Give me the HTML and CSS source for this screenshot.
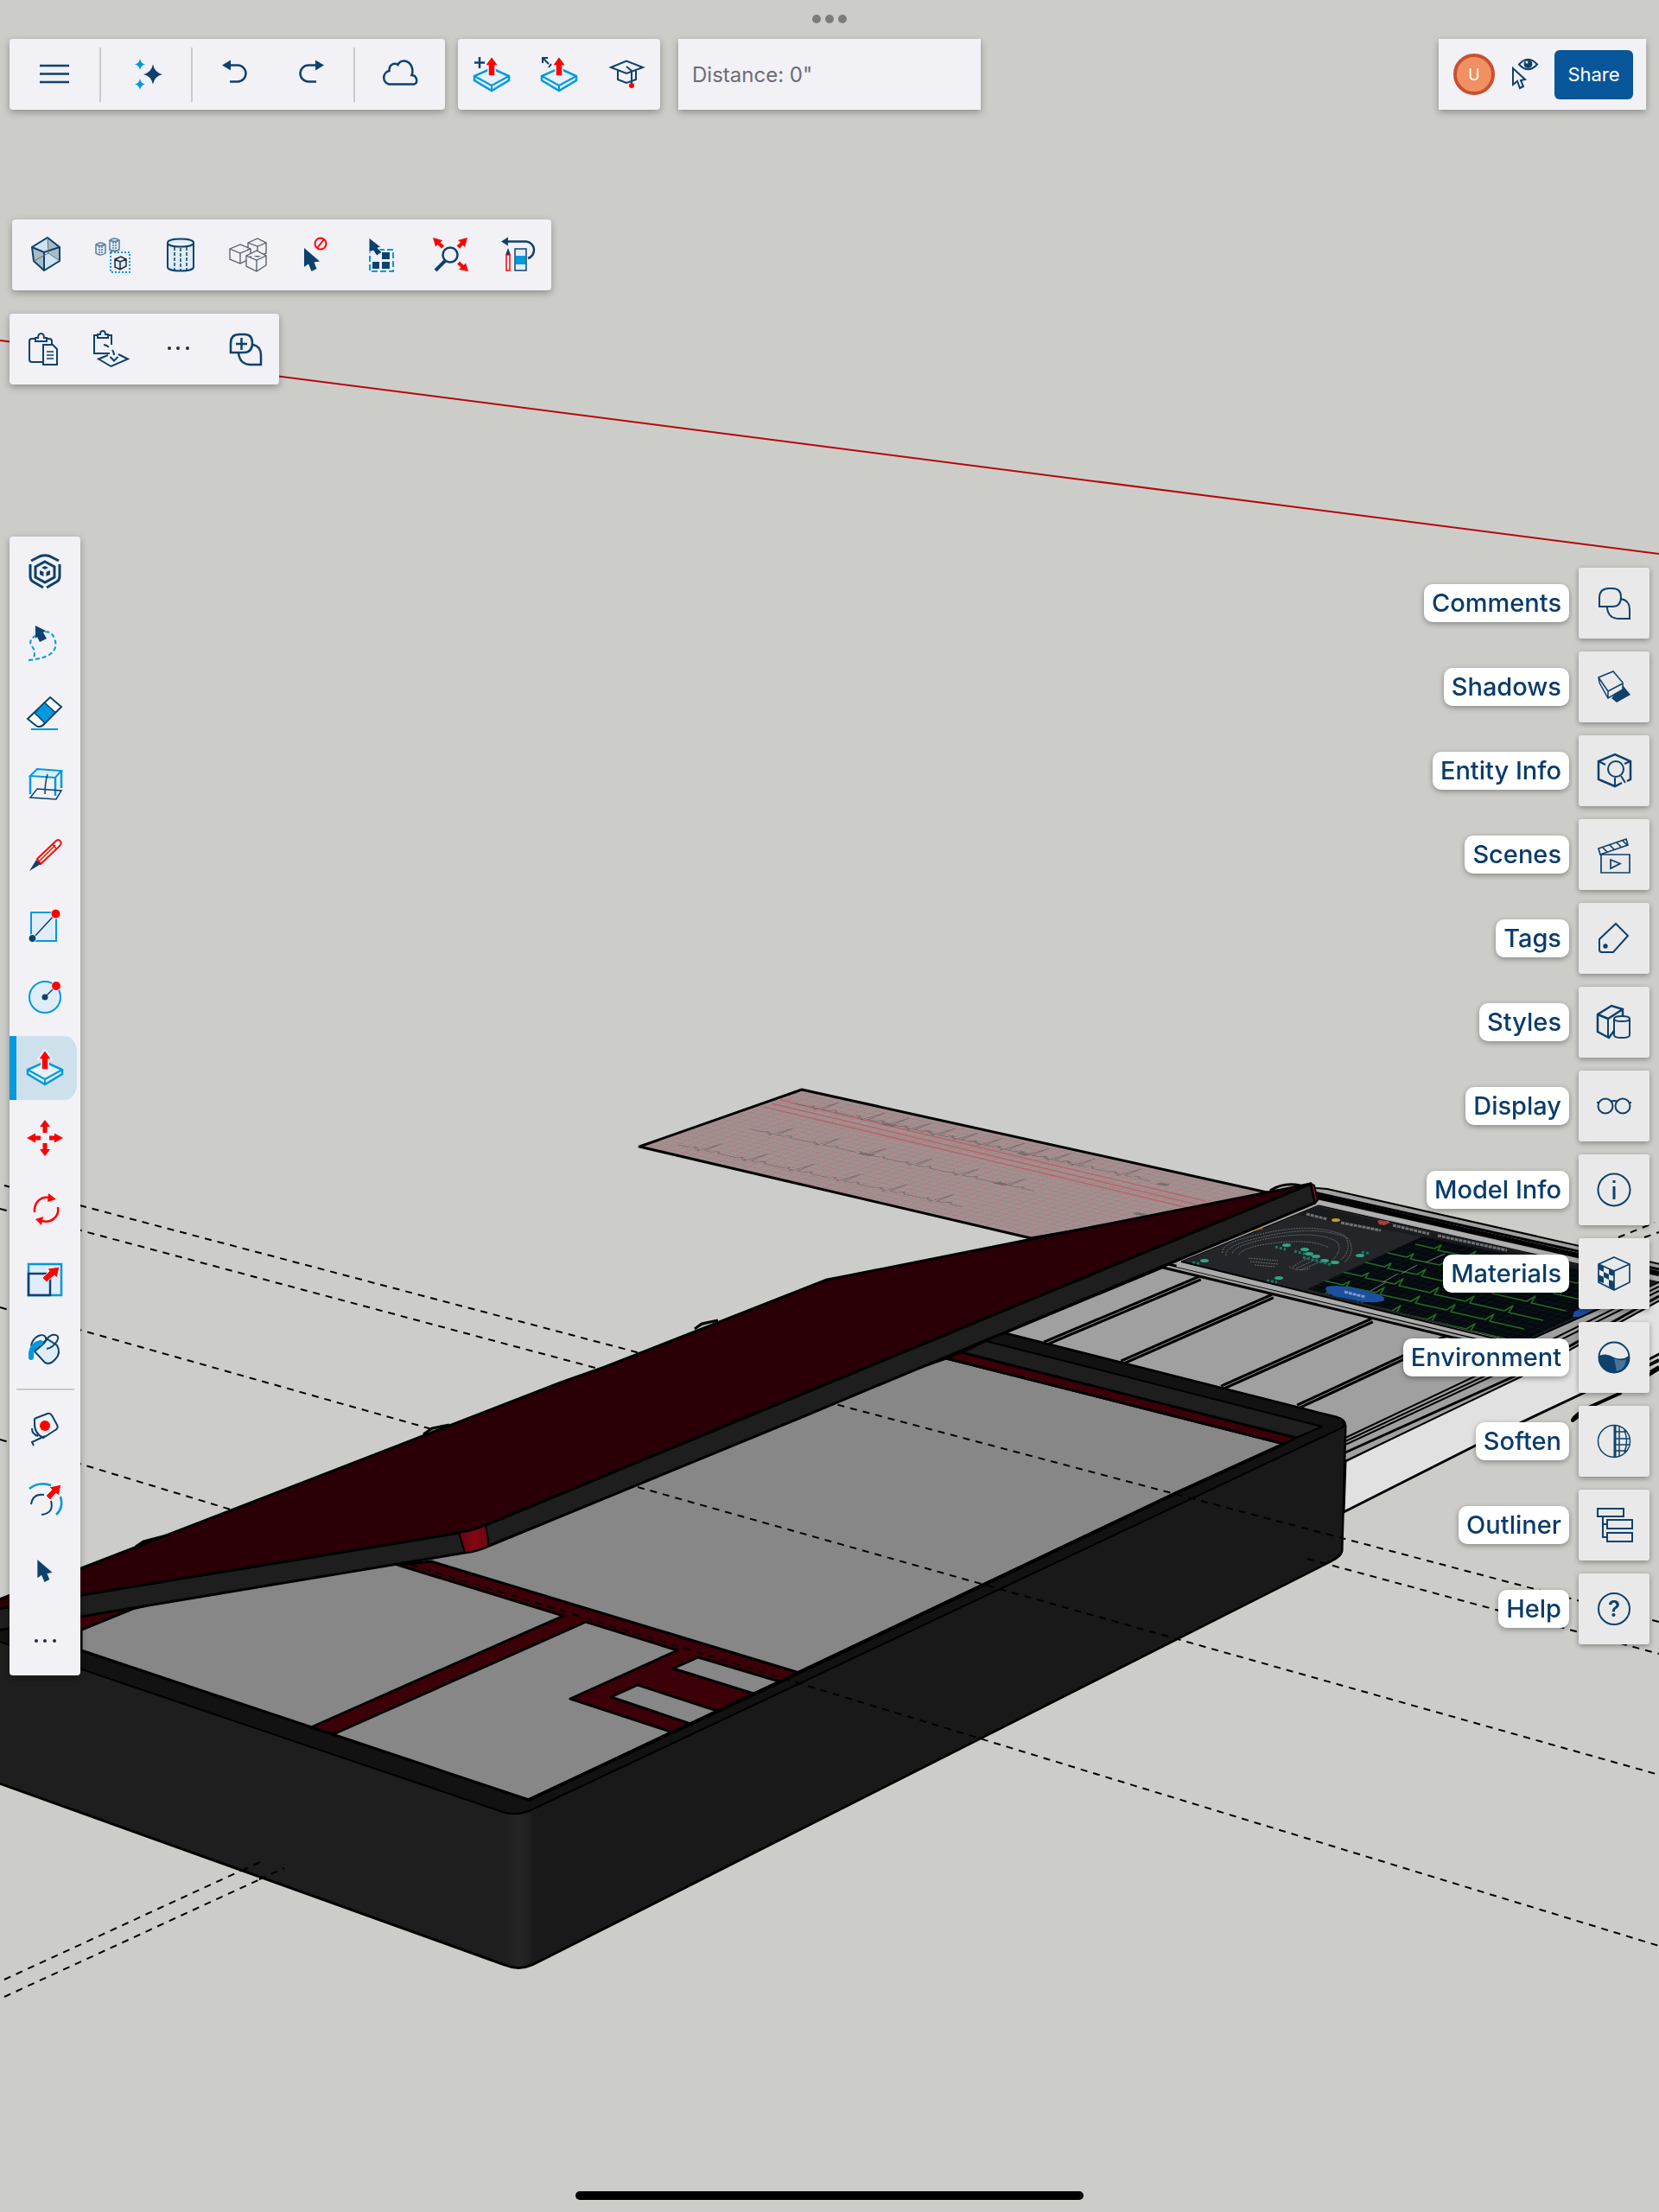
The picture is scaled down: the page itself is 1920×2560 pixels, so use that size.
FILE: index.html
```html
<!DOCTYPE html>
<html lang="en">
<head>
<meta charset="utf-8">
<meta name="viewport" content="width=device-width, initial-scale=1">
<title>3D modeler</title>
<link rel="stylesheet" href="styles.css">
</head>
<body>
<svg class="defs" aria-hidden="true">
  <defs>
    <symbol id="cursor" viewBox="0 0 18 27"><path fill="#0e416c" d="M0 0L18 15.500L11.500 16.500L14.500 24L8.500 27L5 18.500L0 22Z"/></symbol>
    <symbol id="slab" viewBox="0 0 48 48"><path fill="#e4f0fa" stroke="#0099dd" stroke-width="2.500" d="M24 17L44 26V31L24 43L4 31V26Z"/><path fill="none" stroke="#0099dd" stroke-width="2" d="M4 26L24 37L44 26M24 37V43"/><path fill="red" stroke="#f4f8fc" stroke-width="1.500" d="M24 3L32 14H28V26H20V14H16Z"/></symbol>
  </defs>
</svg>
<div class="app">
  <svg class="scene" viewBox="0 0 1920 2560" preserveAspectRatio="xMinYMin slice" role="img" aria-label="Model of an open case">
    <defs>
      <pattern id="ecg-grid" width="11" height="9" patternUnits="userSpaceOnUse" patternTransform="matrix(.977 .213 -.943 .331 740 1327)">
        <rect width="11" height="9" fill="#a09191"/><path d="M0 0H11M0 0V9" stroke="#b0797c" stroke-width="2" fill="none"/>
      </pattern>
      <pattern id="screen-grid" width="9" height="9" patternUnits="userSpaceOnUse" patternTransform="matrix(.97 .24 -.87 .42 1646 1430)">
        <rect width="9" height="9" fill="#050a0e"/><path d="M0 0H9M0 0V9" stroke="#0f2425" stroke-width="1" fill="none"/>
      </pattern>
      <linearGradient id="corner" x1="0" x2="1"><stop offset="0" stop-color="#1e1e1e"/><stop offset=".5" stop-color="#262626"/><stop offset="1" stop-color="#1e1e1e"/></linearGradient>
      <linearGradient id="hinge" x1="0" x2="1"><stop offset="0" stop-color="#5d0610"/><stop offset=".5" stop-color="#820713"/><stop offset="1" stop-color="#6a0610"/></linearGradient>
      <clipPath id="screen-clip"><path d="M1646 1430L1513 1492L1758 1554L1912 1484Z"/></clipPath>
    </defs>
    <path d="M0 394L1920 641" stroke="#b8070b" stroke-width="2"/>
    <g class="guide">
      <path d="M5 1372L980 1629M0 1399L700 1586M0 1513L500 1654M0 1666L300 1757"/>
      <path d="M5 2291L305 2153M5 2311L329 2162M1873 1432L1915 1415M1903 1432L1920 1426"/>
    </g>
    <g class="ink">
      <path fill="url(#ecg-grid)" stroke-width="3" d="M740 1327L928 1261L1480 1383L1193 1433Z"/>
      <g fill="none" stroke="#b5666c" stroke-width="1.500"><path d="M903 1273L1395 1390M893 1277L1385 1394M884 1281L1376 1398"/></g>
      <g fill="none" stroke="#5f5658" stroke-width="1.500" opacity=".6" transform="matrix(.977 .213 -.943 .331 740 1327)">
        <path id="lead" d="M25 -22h14l3-4 3 4h4l2 4 3-26 2 22h8q4-8 8 0h22l3-4 3 4h4l2 4 3-26 2 22h8q4-8 8 0h22l3-4 3 4h4l2 4 3-26 2 22h8q4-8 8 0h22l3-4 3 4h4l2 4 3-26 2 22h8q4-8 8 0h22l3-4 3 4h4l2 4 3-26 2 22h8q4-8 8 0h22l3-4 3 4h4l2 4 3-26 2 22h8q4-8 8 0h14"/>
        <use href="#lead" x="20" y="-68"/><use href="#lead" x="0" y="-144"/>
        <use href="#lead" x="84" y="-144"/>
        <path stroke-width="6" d="M175 -90h14M335 -90h14M500 -90h12M130 -165h14M290 -165h12M455 -165h12"/>
      </g>

      <path fill="#e1e1e1" stroke-width="3" d="M1555 1750L1763 1645L1833 1612L1930 1562V1490L1760 1590L1557 1691Z"/>
      <path fill="#a0a0a0" stroke-width="2" d="M1163 1543L1346 1467L1500 1373L1536 1376L1930 1465V1500L1761 1593L1557 1691L1540 1660Z"/>
      <path fill="none" stroke-width="3" d="M1470 1378Q1485 1368 1505 1372M1521 1380L1920 1469"/>
      <path fill="none" stroke-width="6" d="M1524 1385L1920 1474"/>
      <path fill="none" stroke="#b0b0b0" stroke-width="4" d="M1524 1391L1920 1480"/>
      <path fill="#232529" d="M1526 1395L1367 1460L1513 1496L1758 1556L1920 1484Z"/>
      <path fill="#1a1b1d" stroke="none" d="M1526 1397L1500 1406L1646 1431L1880 1492L1915 1485Z"/>
      <path fill="url(#screen-grid)" stroke="none" d="M1646 1431L1513 1492L1758 1554L1908 1486Z"/>
      <g clip-path="url(#screen-clip)" fill="none" stroke="#2f8a2b" stroke-width="1.500" opacity=".75">
        <path id="trace" d="M1638 1440l22 5 8-4-4 6 34 7 10-6-5 8 36 8 10-6-5 8 36 8 10-6-5 8 40 9 10-6-5 8 40 9"/>
        <use href="#trace" x="-32" y="10"/><use href="#trace" x="-58" y="21"/><use href="#trace" x="-84" y="32"/><use href="#trace" x="-106" y="42"/><use href="#trace" x="-128" y="53"/>
      </g>
      <g fill="none" stroke="#686d72" stroke-width="1" stroke-dasharray="2 1">
        <path id="rib" d="M1415 1450Q1412 1438 1460 1428Q1520 1414 1556 1430Q1566 1445 1552 1458"/>
        <use href="#rib" x="4" y="3"/><path d="M1426 1450Q1430 1440 1475 1432Q1530 1424 1548 1438Q1554 1448 1540 1460M1434 1452Q1440 1442 1480 1438Q1520 1434 1538 1444M1445 1456l34 3M1447 1460l32 3M1452 1464l24 2M1496 1466l24-14M1500 1468l26-12M1504 1470l30-12M1492 1466q10 6 24 2"/>
      </g>
      <g fill="#2fa585" stroke="none"><ellipse cx="1394" cy="1459" rx="5" ry="2"/><ellipse cx="1489" cy="1441" rx="5" ry="2"/><ellipse cx="1510" cy="1446" rx="5" ry="2"/><ellipse cx="1515" cy="1451" rx="5" ry="2"/><ellipse cx="1523" cy="1454" rx="5" ry="2"/><ellipse cx="1533" cy="1459" rx="5" ry="2"/><ellipse cx="1545" cy="1461" rx="5" ry="2"/><ellipse cx="1574" cy="1453" rx="5" ry="2"/><ellipse cx="1480" cy="1479" rx="5" ry="2"/></g>
      <path fill="none" stroke="#217562" stroke-width="3" stroke-dasharray="3 2" d="M1476 1443l12 3M1498 1448l12 3M1508 1455l34 9M1380 1461l10 2M1466 1482l12 2M1576 1449l10 2"/>
      <path stroke="#6f7274" stroke-width="3" stroke-dasharray="4 1" fill="none" d="M1512 1405l24 6M1552 1415l46 9M1612 1418l42 10M1664 1430l80 17"/>
      <ellipse cx="1546" cy="1412" rx="5" ry="2" fill="#c09b27" stroke="none"/><path fill="#a83e38" stroke="none" d="M1594 1413q4-2 7 0 6-1 8 2l-7 3-6-1z"/>
      <path stroke="#a48b24" stroke-width="2" stroke-dasharray="3 1" d="M1450 1424l12-3"/>
      <path stroke="#777b7e" stroke-width="1" fill="none" d="M1650 1461l22-10M1622 1474l18-10M1600 1484l18-10M1586 1494l18-10"/>
      <path fill="#1d4f9f" stroke="none" d="M1536 1489q12-3 32 2l28 7q10 5 4 8-16 3-32-1l-24-5q-14-6-8-11zM1822 1518l20-10 8 4-20 12-10 0z"/>
      <path stroke="#7d9cc8" stroke-width="3" stroke-dasharray="4 1" d="M1556 1495l24 6"/>
      <path fill="none" stroke-width="3" d="M1346 1467L1740 1562M1352 1463L1744 1557"/>
      <path fill="none" stroke="#aaa" stroke-width="6" d="M1362 1463L1740 1553"/>
      <path fill="none" stroke-width="2" d="M1367 1460L1758 1556L1920 1484"/>
      <g fill="none" stroke-width="7"><path id="slots" d="M1209 1555L1389 1479M1298 1577L1473 1500M1414 1606L1588 1528M1502 1628L1674 1548"/></g>
      <g fill="none" stroke="#989898" stroke-width="1"><use href="#slots"/></g>
      <path fill="none" stroke-width="2" d="M1557 1664L1770 1563L1920 1489M1557 1668L1775 1566L1920 1494M1557 1672L1780 1568"/>
      <path fill="none" stroke-width="3" d="M1557 1681L1761 1589L1920 1500"/>
      <path fill="none" stroke-width="4" d="M1876 1612L1836 1630Q1820 1640 1820 1644Q1826 1640 1834 1632M1874 1612L1920 1584M1910 1588L1920 1582M1908 1580L1920 1574"/>

      <path fill="#1e1e1e" stroke-width="3" d="M-9 1886L600 1760L1163 1543L1546 1640Q1558 1643 1557 1652L1553 1795Q1552 1801 1540 1807L616 2274Q600 2281 584 2274L-9 2061Z"/>
      <path fill="#191919" stroke="none" d="M612 2096L1556 1651L1552 1796L1540 1806L614 2273Z"/>
      <path fill="url(#corner)" stroke="none" d="M584 2098H615V2272Q600 2279 586 2272Z"/>
      <path fill="#121212" stroke-width="2" d="M-9 1885L94 1860L1163 1543L1546 1640Q1558 1643 1554 1652L612 2096Q597 2102 582 2097L-9 1897Z"/>
      <path fill="#1e1e1e" stroke-width="2" d="M1141 1552L1530 1651L1500 1664L1112 1566Z"/>
      <path fill="#878787" stroke-width="3" d="M94 1910L612 2083L1361 1728L1486 1671L1095 1572L500 1780L153 1862L94 1886Z"/>
      <path fill="#3c0108" stroke-width="3" d="M1112 1565L1500 1664L1486 1671L1095 1572Z"/>
      <path fill="#3c0108" stroke-width="3" d="M499 1807L925 1936L779 2005L660 1966L784 1910L678 1877L386 2007L360 1999L652 1870L460 1811ZM80 1866L153 1862L80 1892Z"/>
      <path fill="#878787" stroke-width="3" d="M808 1918L902 1946L872 1960L779 1931ZM738 1950L830 1980L799 1995L707 1964Z"/>
      <path fill="none" stroke-width="4" d="M612 2083L925 1936L1361 1728L1486 1671"/>
    </g>
    <g class="guide"><path d="M955 1622L1920 1877M1513 1804L1920 1914M738 1721L1920 2054M476 1811L1920 2252M280 2165L305 2153M300 2175L329 2162"/></g>
    <g class="ink">
      <path fill="#777" stroke-width="3" d="M157 1790L166 1784 193 1777M490 1660L500 1653 520 1649M804 1538L812 1532 831 1528"/>
      <path fill="#1e1e1e" stroke-width="3" d="M-9 1863L531 1774L562 1765L1517 1370L1522 1392L933 1638L566 1789Q554 1795 538 1797L-9 1888Z"/>
      <path fill="#2a0006" stroke-width="3" d="M-9 1854L94 1815L649 1600L700 1582L957 1481L973 1478L1517 1370L863 1640L562 1765Q550 1771 531 1774L94 1846L-9 1863Z"/>
      <path fill="url(#hinge)" stroke-width="2" d="M531 1774Q550 1771 562 1765L566 1789Q554 1795 538 1797Z"/>
      <path fill="#8a0a18" stroke-width="2" d="M1517 1370L1521 1372 1525 1389 1522 1392Z"/>
    </g>
  </svg>

  <div class="grabber" aria-hidden="true"><span></span><span></span><span></span></div>

  <header class="top-row">
    <nav class="bar" aria-label="File">
      <button class="tool wide" aria-label="Menu"><svg viewBox="0 0 48 48"><path class="n" stroke-width="2.500" d="M7 14H41M7 23.500H41M7 33H41"/></svg></button>
      <i class="rule"></i>
      <button class="tool wide" aria-label="AI tools"><svg viewBox="0 0 48 48"><path fill="#0099dd" d="M17 6Q18 11.500 23 12.500Q18 13.500 17 19Q16 13.500 11 12.500Q16 11.500 17 6ZM17 29Q18 34.500 23 35.500Q18 36.500 17 42Q16 36.500 11 35.500Q16 34.500 17 29Z"/><path fill="#0e416c" d="M32 12.500Q34 22 43 24Q34 26 32 35.500Q30 26 21 24Q30 22 32 12.500Z"/></svg></button>
      <i class="rule"></i>
      <button class="tool mid" aria-label="Undo"><svg viewBox="0 0 48 48"><path class="n" d="M19 13.500H29A9.500 9.500 0 0 1 29 32.500H20"/><path fill="#0e416c" d="M11 13.500L21 7.500V19.500Z"/></svg></button>
      <button class="tool mid" aria-label="Redo"><svg viewBox="0 0 48 48"><path class="n" d="M27 13.500H18A9.500 9.500 0 0 0 18 32.500H27"/><path fill="#0e416c" d="M36 13.500L26 7.500V19.500Z"/></svg></button>
      <i class="rule"></i>
      <button class="tool wide" aria-label="Cloud status"><svg viewBox="0 0 48 48"><path class="n" d="M11 35.500A8 8 0 0 1 11.500 20C11 13 17 10 21.500 13C24 7 32 7 36 12.500C39 17 39 21 37.500 25C43 25 45.500 33 40.500 35.500Z"/></svg></button>
    </nav>
    <nav class="bar" aria-label="Tool options">
      <button class="tool" aria-label="New face"><svg viewBox="0 0 48 48"><use href="#slab" x="0" y="0"/><path class="n" d="M4 10.500H16M10 4V17"/></svg></button>
      <button class="tool" aria-label="Stretch"><svg viewBox="0 0 48 48"><use href="#slab" x="0" y="0"/><path class="n" stroke-width="2" d="M5 11V5H11M5 5L12 12M12 16L15 12"/></svg></button>
      <button class="tool" aria-label="Learn"><svg viewBox="0 0 48 48"><path class="n" stroke-width="2" d="M6 16L24 8.500L43 16L24 23ZM14 20V30L24 34L35 30V20M24 15L30 20V36"/><circle cx="30" cy="37" r="3" fill="red"/></svg></button>
    </nav>
    <input class="measure" type="text" aria-label="Measurement" value="Distance: 0&quot;">
    <div class="bar share-bar">
      <button class="avatar" aria-label="Account">U</button>
      <button class="follow" aria-label="Follow view"><svg viewBox="0 0 36 40"><path class="n" stroke-width="2" d="M4 13V32L9 28L12 36L16 34L13 27L18 26ZM11 8.500Q21.500-3 32 8.500Q21.500 20 11 8.500Z"/><circle cx="21.500" cy="8" r="5" fill="#0e416c"/><circle cx="20" cy="6" r="1.500" fill="#fff"/></svg></button>
      <button class="share">Share</button>
    </div>
  </header>

  <div class="context-row">
    <nav class="bar" aria-label="Selection">
      <button class="tool" aria-label="Make solid"><svg viewBox="0 0 48 48"><path fill="#cfe3f1" d="M26 4L40 15V31L22 42L10 31L8 15Z"/><path fill="#9cb0bd" d="M8 15L22 21V42L10 31ZM26 4L27 21L40 31V15Z" opacity=".8"/><path class="n" stroke-width="2" d="M26 4L40 15V31L22 42L10 31L8 15ZM8 15L22 21L40 15M22 21V42"/><path stroke="#5f7280" fill="none" d="M26 4L27 22L10 31M27 22L40 31"/></svg></button>
      <button class="tool" aria-label="Make component"><svg viewBox="0 0 48 48"><g fill="#deedf8" stroke="#5f7b94" stroke-width="1.500"><path d="M4 12Q9 8 15 12V22Q9 26 4 22ZM20 7Q25 3 31 7V18Q25 21 20 18Z"/><path fill="none" d="M4 12Q9 15 15 12M20 7Q25 10 31 7"/><path fill="none" stroke-dasharray="2 1" d="M8 14V23M11 14V23M24 9V19M27 9V19"/></g><rect x="21" y="21" width="22" height="23" fill="none" stroke="#0099dd" stroke-width="2" stroke-dasharray="2 2"/><path fill="#ddeaf4" stroke="#1c2733" stroke-width="1.500" d="M26 29L33 26L39 29V37L32 41L26 38ZM26 29L32 32L39 29M32 32V41"/></svg></button>
      <button class="tool" aria-label="Make group"><svg viewBox="0 0 48 48"><path fill="#deedf8" class="f" stroke-width="2" d="M9 10C9 4 39 4 39 10V38C39 44 9 44 9 38ZM9 10C9 16 39 16 39 10"/><path class="n" stroke-width="1.500" stroke-dasharray="4 2" d="M17 15V42M24 16V42M31 15V42"/></svg></button>
      <button class="tool" aria-label="Explode"><svg viewBox="0 0 48 48"><g fill="#f1f1f6" stroke="#555a68" stroke-width="1.300"><path d="M24 10L35 5L45 10V22L35 26L24 22ZM24 10L35 14L45 10M35 14V26"/><path d="M3 17L15 12L27 17V28L15 34L3 29ZM3 17L15 22L27 17M15 22V34"/><path d="M22 25L34 19L45 25V36L34 43L22 37ZM22 25L34 30L45 25M34 30V43"/></g></svg></button>
      <button class="tool" aria-label="Deselect"><svg viewBox="0 0 48 48"><use href="#cursor" x="11" y="16" width="18" height="27"/><g fill="none" stroke="red" stroke-width="2"><circle cx="30" cy="11" r="6.500"/><path d="M26 16L34 6"/></g></svg></button>
      <button class="tool" aria-label="Select all"><svg viewBox="0 0 48 48"><rect x="9" y="18" width="27" height="25" fill="none" stroke="#0099dd" stroke-width="2" stroke-dasharray="7 3"/><path fill="#0e416c" d="M23 21H32V29H23ZM12 32H20V40H12ZM23 32H32V40H23Z"/><path fill="#0e416c" stroke="#f1f1f6" d="M8 4L22 15L18 16L23 21L17 25L13 19L8 21Z"/></svg></button>
      <button class="tool" aria-label="Zoom extents"><svg viewBox="0 0 48 48"><circle cx="24" cy="24" r="8.500" class="n"/><path class="n" stroke-width="4" d="M18 31L7 42"/><path fill="red" d="M4 4L15 7L12.500 9.500L17 13.500L14 16.500L9.500 12L7 14.500ZM44 4L41 15L38.500 12.500L35 16.500L31.500 13.500L36 9.500L33 7ZM45 43L34 41L36.500 38.500L32 34.500L35 31.500L39.500 36L42 33.500Z"/></svg></button>
      <button class="tool" aria-label="Clear guides"><svg viewBox="0 0 48 48"><path class="n" d="M13 8.500H34A10 10 0 0 1 36 28"/><path fill="#0e416c" d="M5 8.500L13 3.500V13.500ZM10 24L13 16L16 24Z"/><path fill="#fff" stroke="red" stroke-width="1.500" d="M11 24H15V42H11Z"/><path fill="#deedf8" stroke="#0e416c" stroke-width="1.500" d="M21 17H34V42H21Z"/><path fill="#0099dd" d="M22 25H33V35H22Z"/></svg></button>
    </nav>
  </div>

  <nav class="bar clip-bar" aria-label="Clipboard">
    <button class="tool" aria-label="Paste"><svg viewBox="0 0 48 48"><path class="n" stroke-width="2" d="M24 39H11Q8 39 8 36V15Q8 12 11 12H16M27 12H31Q34 12 34 15V19M15 15V11H18Q18 6 21.500 6Q25 6 25 11H28V15ZM24 19H35L40 24V42H24Z"/><path class="n" stroke-width="1.500" d="M28 27H36M28 31H36M28 35H36"/></svg></button>
    <button class="tool" aria-label="Paste in place"><svg viewBox="0 0 48 48"><path class="n" stroke-width="2" d="M23 29H5V8H10M20 8H25V19M9 11V7H12Q12 3 15 3Q18 3 18 7H21V11ZM21 31L10 35.500L24.500 44L44 35.500L33 30M16 19Q20 19.500 22 22M26 25Q28 28 28 31M23.500 33L28 37.500L32.500 33"/></svg></button>
    <button class="tool" aria-label="More"><svg viewBox="0 0 48 48"><g fill="#2a2740"><circle cx="14" cy="23" r="2"/><circle cx="24" cy="23" r="2"/><circle cx="35" cy="23" r="2"/></g></svg></button>
    <button class="tool" aria-label="Add comment"><svg viewBox="0 0 48 48"><path class="n" d="M7 28V17Q7 7 17 7H23Q32 7 32 17Q32 28 22 28ZM33 19Q42 21 42 31V42H29Q17 41 16 28M13 18H26M19.500 11V25"/></svg></button>
  </nav>

  <main class="workspace">
    <nav class="bar palette" aria-label="Drawing tools">
      <button class="tool" aria-label="Search tools"><svg viewBox="0 0 48 48"><path class="n" stroke-width="3" d="M8 11L19 5.500Q24 4 29 5.500L40 11M7 15V29Q7 33 10 35L22 42M41 15V29Q41 33 38 35L26 42"/><path class="n" stroke-width="3" d="M24 12L35 18V30L24 36L13 30V18Z"/><path fill="#0e416c" d="M24 17L28 19L24 21L20 19ZM18 22L22.500 24V29L18 27ZM30 22L25.500 24V29L30 27Z"/></svg></button>
      <button class="tool" aria-label="Lasso select"><svg viewBox="0 0 48 48"><path fill="none" stroke="#0099dd" stroke-width="2" stroke-dasharray="5 3" d="M5 44Q40 41 36 22Q32 7 20 13Q4 18 8 27Q15 34 10 43"/><path fill="#0e416c" d="M13 4L25 10L22 12L26 19L18 23L15 17L13 19Z"/></svg></button>
      <button class="tool" aria-label="Eraser"><svg viewBox="0 0 48 48"><path fill="#fff" class="f" stroke-width="2" d="M30 5L43 16L24 35Q19 41 14 38L4 30Z"/><path fill="#0099dd" stroke="#0e416c" stroke-width="1.500" d="M23.500 11L36 22.500L24 35L12 23Z"/><path stroke="#0099dd" stroke-width="2" d="M8 42H39"/></svg></button>
      <button class="tool" aria-label="Section"><svg viewBox="0 0 48 48"><path fill="#deedf8" stroke="#0099dd" stroke-width="2" d="M15 6L43 8L36 16L7 14Z"/><path fill="none" stroke="#0099dd" stroke-width="2.500" d="M7 14V35M36 16V37M43 8V28"/><path class="n" stroke-width="1.500" d="M15 29L43 31L37 41L7 39ZM27 12Q24 22 24 35"/></svg></button>
      <button class="tool" aria-label="Line"><svg viewBox="0 0 48 48"><path fill="#fff" stroke="red" stroke-width="2" d="M15 28L36 8Q40 4 42 8Q44 10 40 14L19 34Z"/><path stroke="red" stroke-width="1.500" d="M17 31L36 12M33 11L37 16"/><path fill="#0e416c" d="M14 29L19 34L6 42Z"/></svg></button>
      <button class="tool" aria-label="Rectangle"><svg viewBox="0 0 48 48"><rect x="8" y="8" width="29" height="33" fill="#deedf8" stroke="#0099dd" stroke-width="2"/><path class="n" stroke-width="1.500" d="M10 38L36 10"/><circle cx="9.500" cy="38" r="4.500" fill="#0e416c" stroke="#fff"/><circle cx="36.500" cy="9.500" r="5.500" fill="red" stroke="#fff"/></svg></button>
      <button class="tool" aria-label="Circle"><svg viewBox="0 0 48 48"><circle cx="24" cy="24" r="18" fill="#deedf8" stroke="#0099dd" stroke-width="2"/><path class="n" stroke-width="1.500" d="M24 24L34 14"/><circle cx="24" cy="24" r="3.500" fill="#0e416c"/><circle cx="37" cy="11" r="5.500" fill="red" stroke="#fff"/></svg></button>
      <button class="tool active" aria-label="Push/Pull" aria-pressed="true"><svg viewBox="0 0 48 48"><use href="#slab"/></svg></button>
      <button class="tool" aria-label="Move"><svg viewBox="0 0 48 48"><path fill="red" d="M24 2L30 10H26.500V17H21.500V10H18ZM24 44L30 36H26.500V29H21.500V36H18ZM3 23L13 17.500V20.500H19V25.500H13V28.500ZM45 23L35 17.500V20.500H29V25.500H35V28.500Z"/></svg></button>
      <button class="tool" aria-label="Rotate"><svg viewBox="0 0 48 48"><path fill="none" stroke="red" stroke-width="2.500" d="M12 27C11 16 19 8 29 10M39 21C41 32 31 40 21 37"/><path fill="red" d="M28 5L37 12L27 15ZM13 35L22 32L20 42Z"/></svg></button>
      <button class="tool" aria-label="Scale"><svg viewBox="0 0 48 48"><rect x="5" y="5" width="38" height="36" fill="#deedf8" stroke="#0099dd" stroke-width="2.500"/><path class="n" d="M5 16H30V41H5Z"/><path fill="red" stroke="#fff" d="M41 8L38 21L35 18L26 26L21 21L29 13L27 10Z"/></svg></button>
      <button class="tool" aria-label="Paint"><svg viewBox="0 0 48 48"><path fill="#deedf8" class="f" stroke-width="2" d="M13 20L27 10L38 17Q43 26 36 33Q30 40 24 37L12 24Z"/><path class="n" stroke-width="2" d="M8 18C10 6 22 2 25 8C27 14 17 19 12 24M26 10C32 2 43 4 38 12Q33 20 26 21"/><path fill="none" stroke="#0099dd" stroke-width="6" stroke-linecap="round" d="M8 31Q7 17 19 14"/></svg></button>
      <i class="divider"></i>
      <button class="tool" aria-label="Tape measure"><svg viewBox="0 0 48 48"><path class="n" stroke-width="2" d="M12 17Q11 14 14 13L27 8Q30 7 32 10L38 21Q40 25 36 27L22 36Q11 31 12 17M24 34L9 41L11 45M9 25Q9 32 16 34"/><circle cx="24" cy="22" r="6" fill="red"/></svg></button>
      <button class="tool" aria-label="Offset"><svg viewBox="0 0 48 48"><path fill="none" stroke="#0099dd" stroke-width="2.500" d="M6 13Q17 4 31 9M42 22Q46 35 37 43"/><path class="n" stroke-width="2" d="M8 31Q10 18 23 20M31 27Q35 41 20 43"/><path fill="red" stroke="#fff" d="M43 8L40 21L37 18L30 26L25 21L32 14L29 11Z"/></svg></button>
      <button class="tool" aria-label="Select"><svg viewBox="0 0 48 48"><use href="#cursor" x="15" y="13" width="18" height="26"/></svg></button>
      <button class="tool" aria-label="More tools"><svg viewBox="0 0 48 48"><g fill="#2a2740"><circle cx="14" cy="25" r="2"/><circle cx="24" cy="25" r="2"/><circle cx="35" cy="25" r="2"/></g></svg></button>
    </nav>

    <aside class="panels" aria-label="Panels">
      <div class="panel"><label for="p1">Comments</label><button id="p1"><svg viewBox="0 0 48 48"><path class="n" stroke-width="2" d="M7 28V18Q7 7 18 7H22Q32 7 32 17Q32 28 22 28ZM32 19Q42 21 42 31V42H30Q17 42 16 29"/></svg></button></div>
      <div class="panel"><label for="p2">Shadows</label><button id="p2"><svg viewBox="0 0 48 48"><path fill="#0e416c" d="M34 22L43 33L27 42L21 37Z"/><path fill="#e9e9ea" stroke="#0e416c" stroke-width="1.500" d="M6 13L23 6L34 19V27L17 37L7 19ZM6 13L17 29L34 20M17 29V37"/></svg></button></div>
      <div class="panel"><label for="p3">Entity Info</label><button id="p3"><svg viewBox="0 0 48 48"><path class="n" stroke-width="2.500" d="M33 38L25 42L6 34V13L25 5L43 13V34L39 36"/><path class="n" stroke-width="2" d="M6 13L14 17M43 13L36 16M25 32V42M32 30L37 38"/><circle class="n" stroke-width="2" cx="26" cy="22" r="9"/></svg></button></div>
      <div class="panel"><label for="p4">Scenes</label><button id="p4"><svg viewBox="0 0 48 48"><path class="n" stroke-width="1.700" d="M9 24H42V45H9ZM6 17L38 6L40 13L8 24ZM11 16L16 21M19 13L24 18M27 10L32 15M34 8L39 13M20 30V40L31 34.500Z"/></svg></button></div>
      <div class="panel"><label for="p5">Tags</label><button id="p5"><svg viewBox="0 0 48 48"><path class="n" stroke-width="2" d="M26 7L40 21L23 40H10Q7 40 7 37V25Z"/><circle cx="14" cy="33" r="2.700" fill="#0e416c"/></svg></button></div>
      <div class="panel"><label for="p6">Styles</label><button id="p6"><svg viewBox="0 0 48 48"><path class="n" stroke-width="2.500" d="M24 34L18 42L5 35V15L21 5L34 9V17M5 15L17 20L34 9"/><path class="n" stroke-width="2" d="M17 20V41"/><path fill="#e9e9ea" class="f" stroke-width="2" d="M24 20C24 16 42 16 42 20V39C42 43 24 43 24 39ZM24 20C24 24 42 24 42 20"/></svg></button></div>
      <div class="panel"><label for="p7">Display</label><button id="p7"><svg viewBox="0 0 48 48"><g class="n" stroke-width="2"><circle cx="14" cy="24" r="8.500"/><circle cx="34" cy="24" r="8.500"/><path d="M4 20H7M41 20H44M20 19Q24 17 28 19"/></g></svg></button></div>
      <div class="panel"><label for="p8">Model Info</label><button id="p8"><svg viewBox="0 0 48 48"><circle class="n" stroke-width="2" cx="24" cy="24" r="18.500"/><path class="n" stroke-width="3" d="M24 20V35M24 13V16"/></svg></button></div>
      <div class="panel"><label for="p9">Materials</label><button id="p9"><svg viewBox="0 0 48 48"><path class="n" stroke-width="1.700" d="M24 5L42 13V34L24 43L6 34V13ZM6 13L24 21L42 13M24 21V43"/><path fill="#0e416c" d="M6 13L12 16V22L6 19ZM18 18L24 21V27L18 25ZM12 22L18 25V31L12 28ZM6 25L12 28V35L6 33ZM18 31L24 33V43L18 39Z"/></svg></button></div>
      <div class="panel"><label for="p10">Environment</label><button id="p10"><svg viewBox="0 0 48 48"><circle cx="24" cy="24" r="17.500" class="n" stroke-width="2"/><path fill="#0e416c" d="M6.500 22Q15 18 24 24Q33 28 41.500 22Q42 41 24 42Q7 41 6.500 22Z"/><path fill="#47769c" d="M24 25Q32 29 38 26Q37 38 27 40Z"/></svg></button></div>
      <div class="panel"><label for="p11">Soften</label><button id="p11"><svg viewBox="0 0 48 48"><path class="n" stroke-width="1.500" d="M24 5.500A18.500 18.500 0 0 0 24 42.500M24 5.500A18.500 18.500 0 0 1 24 42.500M30 7V41M36 11Q41 24 36 37M24 13H38M24 21H42M24 28H42M24 35H38"/><path class="n" stroke-width="3" d="M25 6V42"/></svg></button></div>
      <div class="panel"><label for="p12">Outliner</label><button id="p12"><svg viewBox="0 0 48 48"><path class="n" stroke-width="2" d="M5 5H35V14H5ZM16 18H45V28H16ZM16 33H45V43H16ZM11 14V38H16M11 23H16"/></svg></button></div>
      <div class="panel"><label for="p13">Help</label><button id="p13"><svg viewBox="0 0 48 48"><circle class="n" stroke-width="2" cx="24" cy="24" r="18"/><text x="24" y="33" class="glyph">?</text></svg></button></div>
    </aside>
  </main>

  <div class="home-indicator" aria-hidden="true"></div>
</div>
</body>
</html>
```
FILE: styles.css
```css
* { box-sizing: border-box; }
body {
  margin: 0;
  background: #cccdc8;
  font-family: Inter, "Liberation Sans", sans-serif;
  color: #0a3c69;
}
button {
  margin: 0;
  padding: 0;
  border: 0;
  background: none;
  font: inherit;
  color: inherit;
}
.defs { position: absolute; width: 0; height: 0; }
.app {
  position: relative;
  display: flex;
  flex-direction: column;
  align-items: flex-start;
  min-height: 100vh;
  padding: 0 11px;
  overflow: hidden;
}
.scene { position: absolute; left: 0; top: 0; width: 100%; height: 100%; }
.app > :not(.scene) { z-index: 1; }
.guide path { fill: none; stroke: #000; stroke-width: 2; stroke-dasharray: 8 7; }
.ink { stroke: #000; stroke-linejoin: round; }

.grabber { display: flex; align-self: center; gap: 5px; height: 45px; padding-top: 17px; }
.grabber span { width: 10px; height: 10px; border-radius: 50%; background: #7c7d79; }

.top-row { display: flex; align-self: stretch; gap: 15px; padding-right: 4px; }
.bar {
  display: flex;
  align-items: center;
  background: #f1f1f6;
  border-radius: 4px;
  box-shadow: 0 3px 8px rgba(0, 0, 0, .3);
}
.tool { display: flex; align-items: center; justify-content: center; width: 78px; height: 82px; }
.tool svg { display: block; width: 48px; height: 48px; }
.wide { width: 104px; }
.mid { width: 93px; }
.rule { width: 2px; height: 63px; background: #c9c9cf; }

.n { fill: none; stroke: #0e416c; }
.f { stroke: #0e416c; }
path.n:not([stroke-width]), circle.n:not([stroke-width]) { stroke-width: 2.5px; }
.glyph { font-size: 26px; font-weight: 600; text-anchor: middle; fill: #0e416c; }

.measure {
  width: 350px;
  height: 82px;
  margin-left: 6px;
  padding: 0 16px;
  border: 0;
  border-radius: 0;
  background: #f1f1f6;
  box-shadow: 0 3px 8px rgba(0, 0, 0, .3);
  font: 400 24px Inter, "Liberation Sans", sans-serif;
  color: #6c6c78;
}
.share-bar { justify-content: space-between; width: 240px; margin-left: auto; padding: 0 15px 0 17px; border-radius: 0; }
.avatar {
  width: 48px;
  height: 48px;
  border: 4px solid #c9502f;
  border-radius: 50%;
  background: #f09063;
  color: #fff;
  font-size: 18px;
}
.follow svg { display: block; width: 36px; height: 40px; }
.share { width: 91px; height: 57px; border-radius: 6px; background: #08569a; color: #fff; font-size: 22px; }

.context-row { padding: 127px 3px 27px; }
.workspace { display: flex; justify-content: space-between; align-items: flex-start; align-self: stretch; margin-top: 176px; }
.palette { flex-direction: column; width: 82px; }
.palette .tool { width: 82px; }
.palette .active {
  height: 74px;
  margin: 4px 0;
  padding-right: 4px;
  border-left: 8px solid #0099dd;
  border-right: 4px solid #f1f1f6;
  background: #cfe0ed;
  border-radius: 0 18px 18px 0;
}
.divider { width: 67px; height: 2px; margin: 2px 0; background: #c9c9cf; }

.panels { display: flex; flex-direction: column; align-items: flex-end; gap: 15px; padding-top: 36px; }
.panel { display: flex; align-items: center; gap: 11px; }
.panel label {
  padding: 0 9px;
  border-radius: 10px;
  background: #fff;
  box-shadow: 0 2px 6px rgba(0, 0, 0, .35);
  font-size: 29px;
  font-weight: 500;
  line-height: 44px;
}
.panel button {
  display: flex;
  align-items: center;
  justify-content: center;
  width: 82px;
  height: 82px;
  border-radius: 3px;
  background: #e9e9ea;
  box-shadow: 0 2px 6px rgba(0, 0, 0, .35);
}
.panel svg { display: block; width: 48px; height: 48px; }

.home-indicator { align-self: center; width: 588px; height: 10px; margin-top: auto; margin-bottom: 14px; border-radius: 5px; background: #000; }
```
